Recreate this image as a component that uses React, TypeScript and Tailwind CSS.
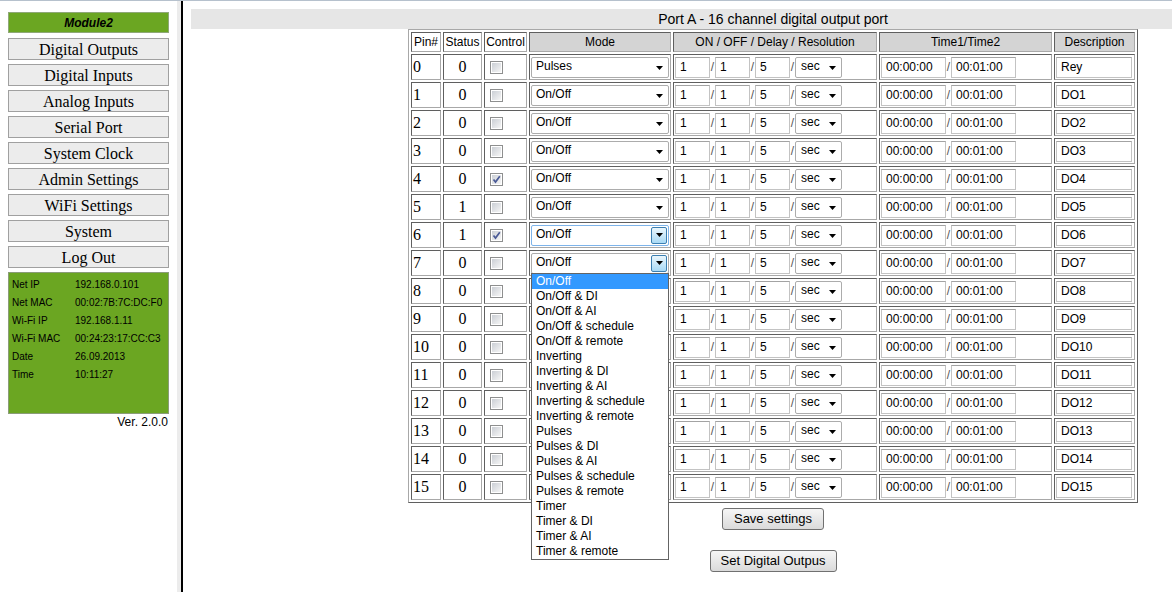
import React from 'react';

const navItems = [
  'Digital Outputs',
  'Digital Inputs',
  'Analog Inputs',
  'Serial Port',
  'System Clock',
  'Admin Settings',
  'WiFi Settings',
  'System',
  'Log Out',
];

const info = [
  ['Net IP', '192.168.0.101'],
  ['Net MAC', '00:02:7B:7C:DC:F0'],
  ['Wi-Fi IP', '192.168.1.11'],
  ['Wi-Fi MAC', '00:24:23:17:CC:C3'],
  ['Date', '26.09.2013'],
  ['Time', '10:11:27'],
];

const modes = [
  'On/Off',
  'On/Off & DI',
  'On/Off & AI',
  'On/Off & schedule',
  'On/Off & remote',
  'Inverting',
  'Inverting & DI',
  'Inverting & AI',
  'Inverting & schedule',
  'Inverting & remote',
  'Pulses',
  'Pulses & DI',
  'Pulses & AI',
  'Pulses & schedule',
  'Pulses & remote',
  'Timer',
  'Timer & DI',
  'Timer & AI',
  'Timer & remote',
];

const rows = Array.from({ length: 16 }, (_, i) => ({
  pin: i,
  status: i === 5 || i === 6 ? 1 : 0,
  checked: i === 4 || i === 6,
  mode: i === 0 ? 'Pulses' : 'On/Off',
  desc: i === 0 ? 'Rey' : `DO${i}`,
}));

const Arrow = () => (
  <svg width="7" height="4" viewBox="0 0 7 4">
    <path d="M0 0h7L3.5 4z" fill="#000" />
  </svg>
);

// fake <select> drawn with divs
const Select = ({
  value,
  wide,
  state,
  open,
}: {
  value: string;
  wide?: boolean;
  state?: 'focus' | 'hover';
  open?: boolean;
}) => {
  return (
    <div
      className={`relative flex h-[21px] shrink-0 items-center rounded-[2px] border bg-white pb-[2px] text-[12px] text-black ${
        wide ? 'w-[138px] pl-[4px]' : 'w-[47px] pl-[5px]'
      } ${state === 'focus' ? 'border-[#7eb4ea]' : 'border-[#acacac]'}`}
    >
      <span className="flex-1">{value}</span>
      {state ? (
        <div className="mr-[1px] mt-[2px] flex h-[17px] w-[16px] items-center justify-center rounded-[2px] border border-[#3c7fb1] bg-gradient-to-b from-[#eaf6fd] to-[#a7d9f5]">
          <Arrow />
        </div>
      ) : (
        <div className="mr-[5px] mt-[3px] flex items-center">
          <Arrow />
        </div>
      )}
      {open && (
        <div className="absolute left-[-1px] top-[19px] z-10 w-[138px] border border-[#646464] bg-white">
          {modes.map((m, i) => (
            <div
              key={m}
              className={`h-[15px] whitespace-nowrap pl-[4px] text-[12px] leading-[15px] ${
                i === 0 ? 'bg-[#3399ff] text-white' : 'text-black'
              }`}
            >
              {m}
            </div>
          ))}
        </div>
      )}
    </div>
  );
};

const TextBox = ({ value, w }: { value: string; w: string }) => (
  <div
    className={`flex h-[21px] shrink-0 items-center border border-[#c3c3c3] border-t-[#a3a3a3] bg-white pl-[4px] text-[12px] text-black ${w}`}
  >
    {value}
  </div>
);

const Slash = () => <span className="w-[5px] shrink-0 text-center text-[12px] text-[#555]">/</span>;

const Checkbox = ({ checked }: { checked: boolean }) => (
  <div className="relative h-[13px] w-[13px] border border-[#8e8f8f] bg-white p-[1px]">
    <div className="h-full w-full bg-gradient-to-br from-[#cbcfd5] to-[#f6f6f6]" />
    {checked && (
      <svg className="absolute left-[1px] top-[1px]" width="9" height="9" viewBox="0 0 9 9">
        <path d="M1.5 4.5l2 2.5L7.8 1.2" stroke="#4a5a96" strokeWidth="1.7" fill="none" />
      </svg>
    )}
  </div>
);

const td = 'border border-t-[#5f5f5f] border-l-[#5f5f5f] border-r-[#a8a8a8] border-b-[#a8a8a8] p-0';
const thGray = `${td} bg-[#d4d4d4] text-[12px] font-normal text-center text-black`;
const thPlain = `${td} bg-white text-[12px] font-normal text-center text-black`;

export default function App() {
  return (
    <div className="flex h-[592px] w-[1172px] overflow-hidden border-t border-[#b6c1cd] bg-white font-['Liberation_Sans',Arial,sans-serif]">
      {/* Sidebar */}
      <aside className="flex w-[183px] shrink-0 border-r-2 border-black">
        <div className="flex w-[177px] flex-col px-[8px] pt-[11px]">
          <div className="flex h-[21px] items-center justify-center border border-[#8fa878] bg-[#6ba622] text-[12px] font-bold italic text-black">
            Module2
          </div>
          <div className="mt-[5px] flex flex-col gap-[4px]">
            {navItems.map((n) => (
              <div
                key={n}
                className="flex h-[22px] items-center justify-center border border-[#a0a0a0] bg-[#ececec] pt-[1px] font-['Liberation_Serif','Times_New_Roman',serif] text-[16px] text-black"
              >
                {n}
              </div>
            ))}
          </div>
          <div className="mt-[4px] h-[142px] border border-[#8a9c78] bg-[#6ba622] pl-[3px] pt-[3px]">
            {info.map(([k, v]) => (
              <div key={k} className="flex text-[10px] leading-[18px] text-black">
                <span className="w-[63px]">{k}</span>
                <span>{v}</span>
              </div>
            ))}
          </div>
          <div className="mt-[1px] pr-[1px] text-right text-[12px] leading-[14px] text-black">Ver. 2.0.0</div>
        </div>
        <div className="w-[4px] bg-[#ececec]" />
      </aside>

      {/* Main */}
      <main className="min-w-0 flex-1">
        <div className="ml-[8px] mt-[8px] flex w-[1164px] flex-col items-center">
          <div className="h-[20px] w-full bg-[#e6e6e6] text-center text-[14px] leading-[20px] text-black">
            Port A - 16 channel digital output port
          </div>

          <table className="w-[730px] table-fixed border-separate border-spacing-[2px] border border-t-[#a8a8a8] border-l-[#a8a8a8] border-r-[#5f5f5f] border-b-[#5f5f5f]">
            <thead>
              <tr className="h-[19px]">
                <th className={`${thPlain} w-[30px]`}>Pin#</th>
                <th className={`${thPlain} w-[39px]`}>Status</th>
                <th className={`${thPlain} w-[43px]`}>Control</th>
                <th className={`${thGray} w-[142px]`}>Mode</th>
                <th className={`${thGray} w-[204px]`}>ON / OFF / Delay / Resolution</th>
                <th className={`${thGray} w-[173px]`}>Time1/Time2</th>
                <th className={`${thGray} w-[81px]`}>Description</th>
              </tr>
            </thead>
            <tbody>
              {rows.map((r) => (
                <tr key={r.pin} className="h-[26px]">
                  <td className={`${td} pl-[1px] font-['Liberation_Serif','Times_New_Roman',serif] text-[16px] text-black`}>
                    {r.pin}
                  </td>
                  <td className={`${td} text-center font-['Liberation_Serif','Times_New_Roman',serif] text-[16px] text-black`}>
                    {r.status}
                  </td>
                  <td className={td}>
                    <div className="pl-[5px]">
                      <Checkbox checked={r.checked} />
                    </div>
                  </td>
                  <td className={td}>
                    {/* rows below the open list are hidden by it */}
                    {r.pin <= 7 && (
                      <div className="pl-[1px]">
                        <Select
                          value={r.mode}
                          wide
                          state={r.pin === 6 ? 'focus' : r.pin === 7 ? 'hover' : undefined}
                          open={r.pin === 7}
                        />
                      </div>
                    )}
                  </td>
                  <td className={td}>
                    <div className="flex items-center pl-[1px]">
                      <TextBox value="1" w="w-[35px]" />
                      <Slash />
                      <TextBox value="1" w="w-[35px]" />
                      <Slash />
                      <TextBox value="5" w="w-[35px]" />
                      <Slash />
                      <Select value="sec" />
                    </div>
                  </td>
                  <td className={td}>
                    <div className="flex items-center pl-[1px]">
                      <TextBox value="00:00:00" w="w-[65px]" />
                      <Slash />
                      <TextBox value="00:01:00" w="w-[65px]" />
                    </div>
                  </td>
                  <td className={td}>
                    <div className="pl-[1px]">
                      <TextBox value={r.desc} w="w-[76px]" />
                    </div>
                  </td>
                </tr>
              ))}
            </tbody>
          </table>

          <button className="mt-[5px] h-[22px] w-[102px] rounded-[3px] border border-[#707070] bg-gradient-to-b from-[#f6f6f6] to-[#dadada] text-[13px] text-black">
            Save settings
          </button>
          <button className="mt-[20px] h-[22px] w-[127px] rounded-[3px] border border-[#707070] bg-gradient-to-b from-[#f6f6f6] to-[#dadada] text-[13px] text-black">
            Set Digital Outpus
          </button>
        </div>
      </main>
    </div>
  );
}
